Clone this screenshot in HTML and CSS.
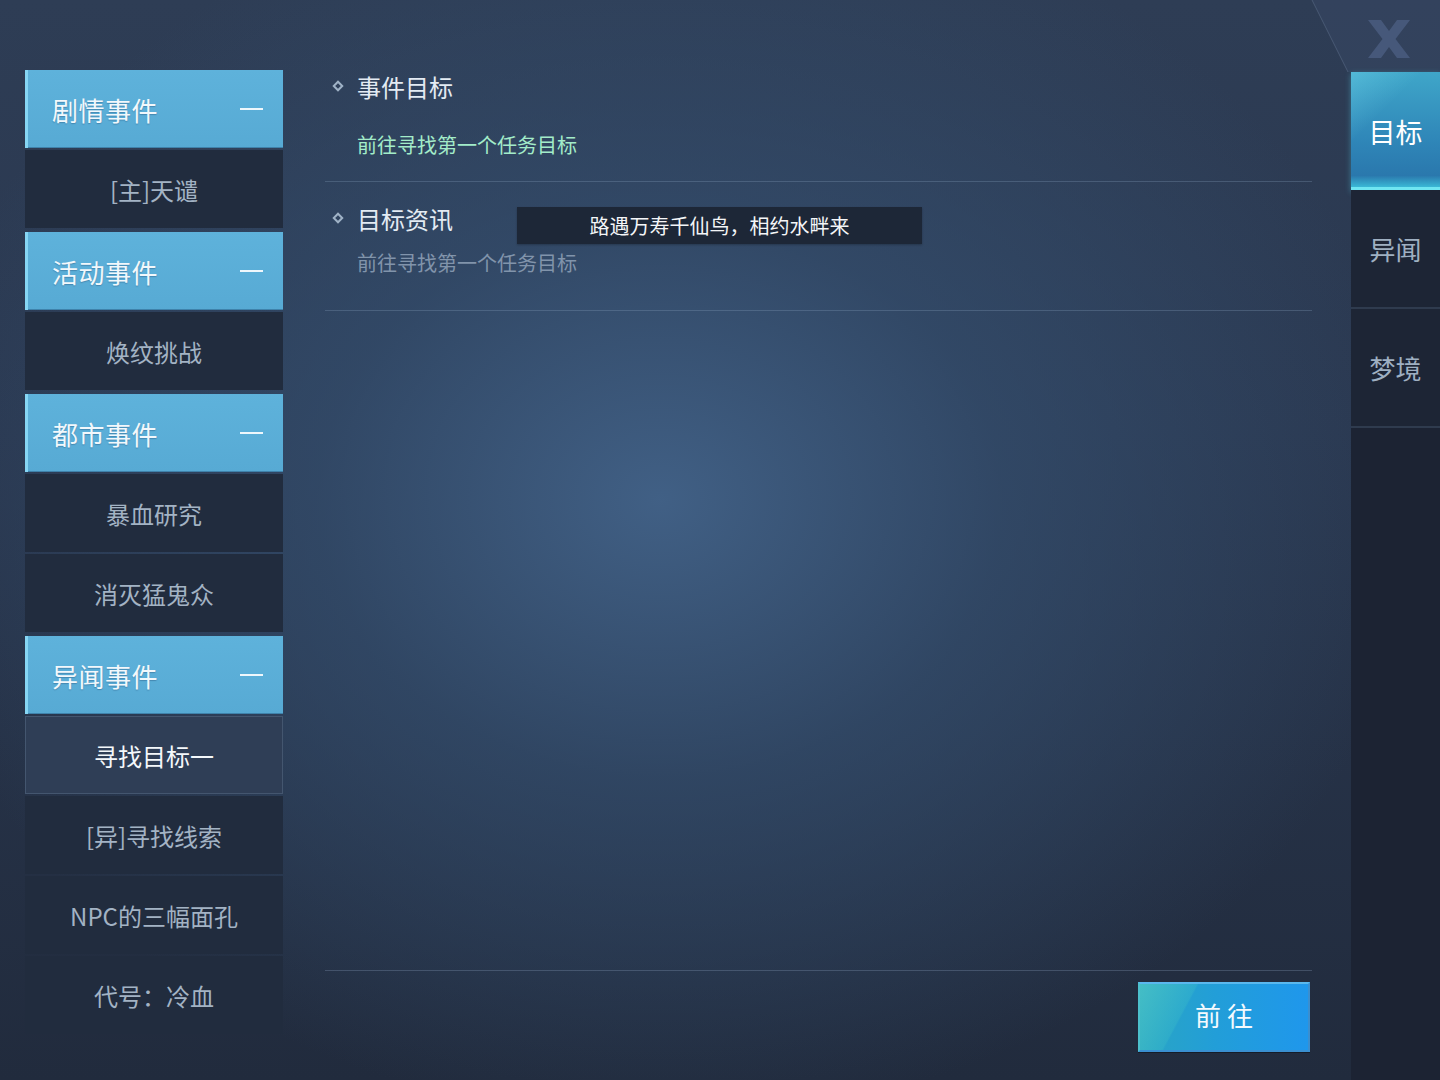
FILE: index.html
```html
<!DOCTYPE html>
<html lang="zh-CN">
<head>
<meta charset="utf-8">
<title>事件</title>
<link rel="stylesheet" href="styles.css">
</head>
<body>
<div class="screen">
  <aside class="side">
    <div class="group-head"><span>剧情事件</span><i class="minus"></i></div>
    <div class="item">[主]天谴</div>
    <div class="group-head gap"><span>活动事件</span><i class="minus"></i></div>
    <div class="item">焕纹挑战</div>
    <div class="group-head gap"><span>都市事件</span><i class="minus"></i></div>
    <div class="item">暴血研究</div>
    <div class="item">消灭猛鬼众</div>
    <div class="group-head gap"><span>异闻事件</span><i class="minus"></i></div>
    <div class="item active">寻找目标一</div>
    <div class="item">[异]寻找线索</div>
    <div class="item">NPC的三幅面孔</div>
    <div class="item">代号：冷血</div>
  </aside>

  <main class="main">
    <section class="block first">
      <div class="title"><i class="diamond"></i>事件目标</div>
      <div class="desc green">前往寻找第一个任务目标</div>
    </section>
    <section class="block second">
      <div class="title"><i class="diamond"></i>目标资讯</div>
      <div class="desc grey">前往寻找第一个任务目标</div>
      <div class="tip">路遇万寿千仙鸟，相约水畔来</div>
    </section>
    <div class="spacer"></div>
    <footer class="foot">
      <button class="go"><span>前往</span></button>
    </footer>
  </main>

  <nav class="tabs">
    <div class="close">
      <svg width="89" height="72" viewBox="0 0 89 72">
        <path d="M17 20 L30 20 L38 31 L46 20 L59 20 L44.5 39 L59 58 L46 58 L38 47 L30 58 L17 58 L31.5 39 Z" fill="#46587a"/>
      </svg>
    </div>
    <div class="tab active">目标</div>
    <div class="tab">异闻</div>
    <div class="tab">梦境</div>
    <div class="tab-rest"></div>
  </nav>
  <svg class="corner" width="140" height="72" viewBox="0 0 140 72">
    <polygon points="12,0 140,0 140,72 48,72" fill="rgba(60,78,110,0.35)"/>
    <line x1="12" y1="0" x2="48" y2="72" stroke="rgba(120,140,170,0.35)" stroke-width="1"/>
  </svg>
</div>
</body>
</html>
```

FILE: styles.css
```css
* { box-sizing: border-box; }
html, body { margin: 0; padding: 0; }
body {
  width: 1440px;
  height: 1080px;
  overflow: hidden;
  font-family: "Noto Sans CJK SC", "Noto Sans", sans-serif;
  background: #1f2839;
}
.screen {
  position: relative;
  width: 1440px;
  height: 1080px;
  display: flex;
  background:
    radial-gradient(ellipse 760px 620px at 660px 500px, rgba(66,98,136,0.95) 0%, rgba(52,78,110,0.7) 45%, rgba(30,40,58,0) 100%),
    linear-gradient(180deg, #2e3d55 0%, #2a3850 40%, #212b3d 100%);
}

/* sidebar */
.side {
  width: 258px;
  margin-left: 25px;
  padding-top: 70px;
  display: flex;
  flex-direction: column;
  gap: 2px;
  position: relative;
  z-index: 1;
}
.group-head {
  height: 78px;
  display: flex;
  align-items: center;
  justify-content: space-between;
  padding: 0 20px 0 27px;
  background: linear-gradient(180deg, #5eb2db 0%, #57aad4 100%);
  border-left: 3px solid #86d6f4;
  color: #f2f8fc;
  font-size: 26px;
  letter-spacing: 0.5px;
  text-shadow: 0 1px 1px rgba(30,70,110,0.35);
  box-shadow: inset 0 -1px 0 rgba(40,90,130,0.5);
}
.group-head span { margin-left: -3px; }
.group-head.gap { margin-top: 2px; }
.minus {
  display: block;
  width: 23px;
  height: 2px;
  background: #eef7fc;
}
.item {
  height: 78px;
  display: flex;
  align-items: center;
  justify-content: center;
  background: #212c3e;
  color: #a3b3c4;
  font-size: 24px;
}
.item.active {
  background: #2f3e56;
  border: 1px solid #44566f;
  color: #f4f8fb;
}

/* main */
.main {
  width: 987px;
  margin-left: 42px;
  padding-top: 70px;
  display: flex;
  flex-direction: column;
  position: relative;
  z-index: 1;
}
.block {
  position: relative;
  border-bottom: 1px solid rgba(140,165,195,0.28);
}
.block.first { height: 112px; }
.block.second { height: 129px; padding-top: 20px; }
.title {
  height: 36px;
  display: flex;
  align-items: center;
  color: #e3ebf3;
  font-size: 24px;
  padding-left: 32px;
  position: relative;
  top: -2px;
}
.diamond {
  position: absolute;
  left: 9px;
  top: 14px;
  width: 8px;
  height: 8px;
  border: 2px solid #9fb2c6;
  transform: rotate(45deg);
}
.desc {
  height: 24px;
  line-height: 24px;
  font-size: 20px;
  padding-left: 32px;
}
.first .desc { margin-top: 27px; }
.second .desc { margin-top: 13px; }
.green { color: #a3ecc9; }
.grey { color: #8194ab; }
.tip {
  position: absolute;
  left: 192px;
  top: 25px;
  width: 405px;
  height: 37px;
  background: #1d2737;
  color: #f4f6f8;
  font-size: 20px;
  display: flex;
  align-items: center;
  justify-content: center;
  box-shadow: 0 1px 2px rgba(0,0,0,0.25);
}
.spacer { flex: 1; }
.foot {
  border-top: 1px solid rgba(140,160,190,0.3);
  display: flex;
  justify-content: flex-end;
  padding: 11px 2px 28px 0;
}
.go {
  width: 172px;
  height: 70px;
  border: 2px solid #3a8fd0;
  border-top-color: #5ab8ee;
  border-left-color: #4cc0cc;
  background:
    linear-gradient(118deg, rgba(90,210,200,0.55) 0%, rgba(60,190,200,0.35) 28%, rgba(0,0,0,0) 29%),
    linear-gradient(90deg, #2aa5c3 0%, #229ed8 45%, #1f97ec 100%);
  color: #f4fafe;
  font-family: "Noto Sans CJK SC", sans-serif;
  font-size: 26px;
  letter-spacing: 6px;
  padding: 0 0 5px 6px;
  box-shadow: 0 1px 0 rgba(0,0,0,0.35);
}

/* right tabs */
.tabs {
  width: 89px;
  margin-left: 39px;
  display: flex;
  flex-direction: column;
  position: relative;
  z-index: 2;
}
.close {
  height: 72px;
}
.close svg { display: block; }
.tab {
  height: 119px;
  display: flex;
  align-items: center;
  justify-content: center;
  background: #1d2535;
  color: #9fb0c2;
  font-size: 26px;
  border-bottom: 2px solid #2f3b4e;
}
.tab.active {
  height: 118px;
  padding-top: 4px;
  color: #ffffff;
  font-size: 27px;
  border-bottom: 3px solid #6fe6f2;
  background:
    linear-gradient(135deg, rgba(120,220,240,0.35) 0%, rgba(0,0,0,0) 35%),
    linear-gradient(180deg, #3fa6c9 0%, #2f86b8 60%, #2a78ad 90%, #3ab8d6 100%);
  box-shadow: 0 2px 6px rgba(90,220,240,0.4);
}
.tab-rest {
  flex: 1;
  background: #1c2333;
}
.corner {
  position: absolute;
  right: 0;
  top: 0;
  z-index: 1;
}
```
